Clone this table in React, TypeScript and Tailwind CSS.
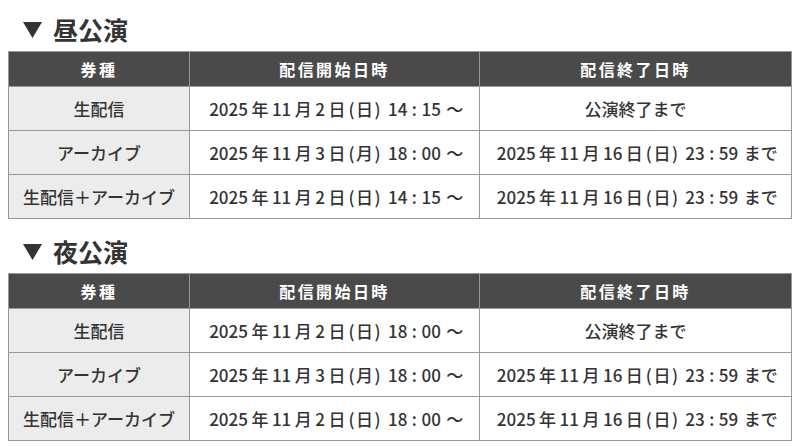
const FONT = "font-['Noto_Sans_CJK_JP',sans-serif]";

type Row = { type: string; start: string; end: string };

const sections: { title: string; rows: Row[] }[] = [
  {
    title: '昼公演',
    rows: [
      { type: '生配信', start: '2025年11月2日(日) 14：15～', end: '公演終了まで' },
      { type: 'アーカイブ', start: '2025年11月3日(月) 18：00～', end: '2025年11月16日(日) 23：59まで' },
      { type: '生配信＋アーカイブ', start: '2025年11月2日(日) 14：15～', end: '2025年11月16日(日) 23：59まで' },
    ],
  },
  {
    title: '夜公演',
    rows: [
      { type: '生配信', start: '2025年11月2日(日) 18：00～', end: '公演終了まで' },
      { type: 'アーカイブ', start: '2025年11月3日(月) 18：00～', end: '2025年11月16日(日) 23：59まで' },
      { type: '生配信＋アーカイブ', start: '2025年11月2日(日) 18：00～', end: '2025年11月16日(日) 23：59まで' },
    ],
  },
];

// numbers, brackets and the colon get a little air around them
function DateText({ text }: { text: string }) {
  if (!/[0-9]/.test(text)) return <>{text}</>;
  const parts = text.split(/([0-9]+|[()]|：|～|まで)/).filter(Boolean);
  return (
    <>
      {parts.map((p, i) => {
        if (/^[0-9]+$/.test(p)) return <span key={i} className="px-[3.5px]">{p}</span>;
        if (p === '(') return <span key={i} className="pl-[3px] pr-[1.5px]">{p}</span>;
        if (p === ')') return <span key={i} className="pl-[1.5px]">{p}</span>;
        if (p === '：') return <span key={i} className="px-[1px]">:</span>;
        if (p === '～') return <span key={i} className="pl-[2px]">{p}</span>;
        if (p === 'まで') return <span key={i} className="pl-[2px]">{p}</span>;
        return <span key={i}>{p}</span>;
      })}
    </>
  );
}

function ScheduleTable({ rows }: { rows: Row[] }) {
  return (
    <table className="w-[784px] border-collapse table-fixed text-[#333]">
      <colgroup>
        <col className="w-[181px]" />
        <col className="w-[290px]" />
        <col />
      </colgroup>
      <thead>
        <tr className="bg-[#4a4a4a] text-white text-[16px] font-bold tracking-[0.15em] h-[35px]">
          <th className="border border-[#999]">券種</th>
          <th className="border border-[#999]">配信開始日時</th>
          <th className="border border-[#999]">配信終了日時</th>
        </tr>
      </thead>
      <tbody>
        {rows.map(r => (
          <tr key={r.type} className="h-[44px] text-[17px] font-medium">
            <td className="border border-[#999] bg-[#ececec] text-center">{r.type}</td>
            <td className="border border-[#999] text-center whitespace-nowrap">
              <DateText text={r.start} />
            </td>
            <td className="border border-[#999] text-center whitespace-nowrap">
              <DateText text={r.end} />
            </td>
          </tr>
        ))}
      </tbody>
    </table>
  );
}

export default function App() {
  return (
    <div className={`${FONT} bg-white w-[800px] h-[446px] px-2 overflow-hidden`}>
      {sections.map(s => (
        <section key={s.title} className="mb-[3px]">
          <h2 className="flex items-center gap-[11px] h-[51px] pt-[8px] pl-[15px] text-[25px] font-bold text-[#333] leading-none">
            <svg width="19" height="16" viewBox="0 0 19 16" className="shrink-0">
              <path d="M0 0 H19 L9.5 16 Z" fill="#333" />
            </svg>
            {s.title}
          </h2>
          <ScheduleTable rows={s.rows} />
        </section>
      ))}
    </div>
  );
}
